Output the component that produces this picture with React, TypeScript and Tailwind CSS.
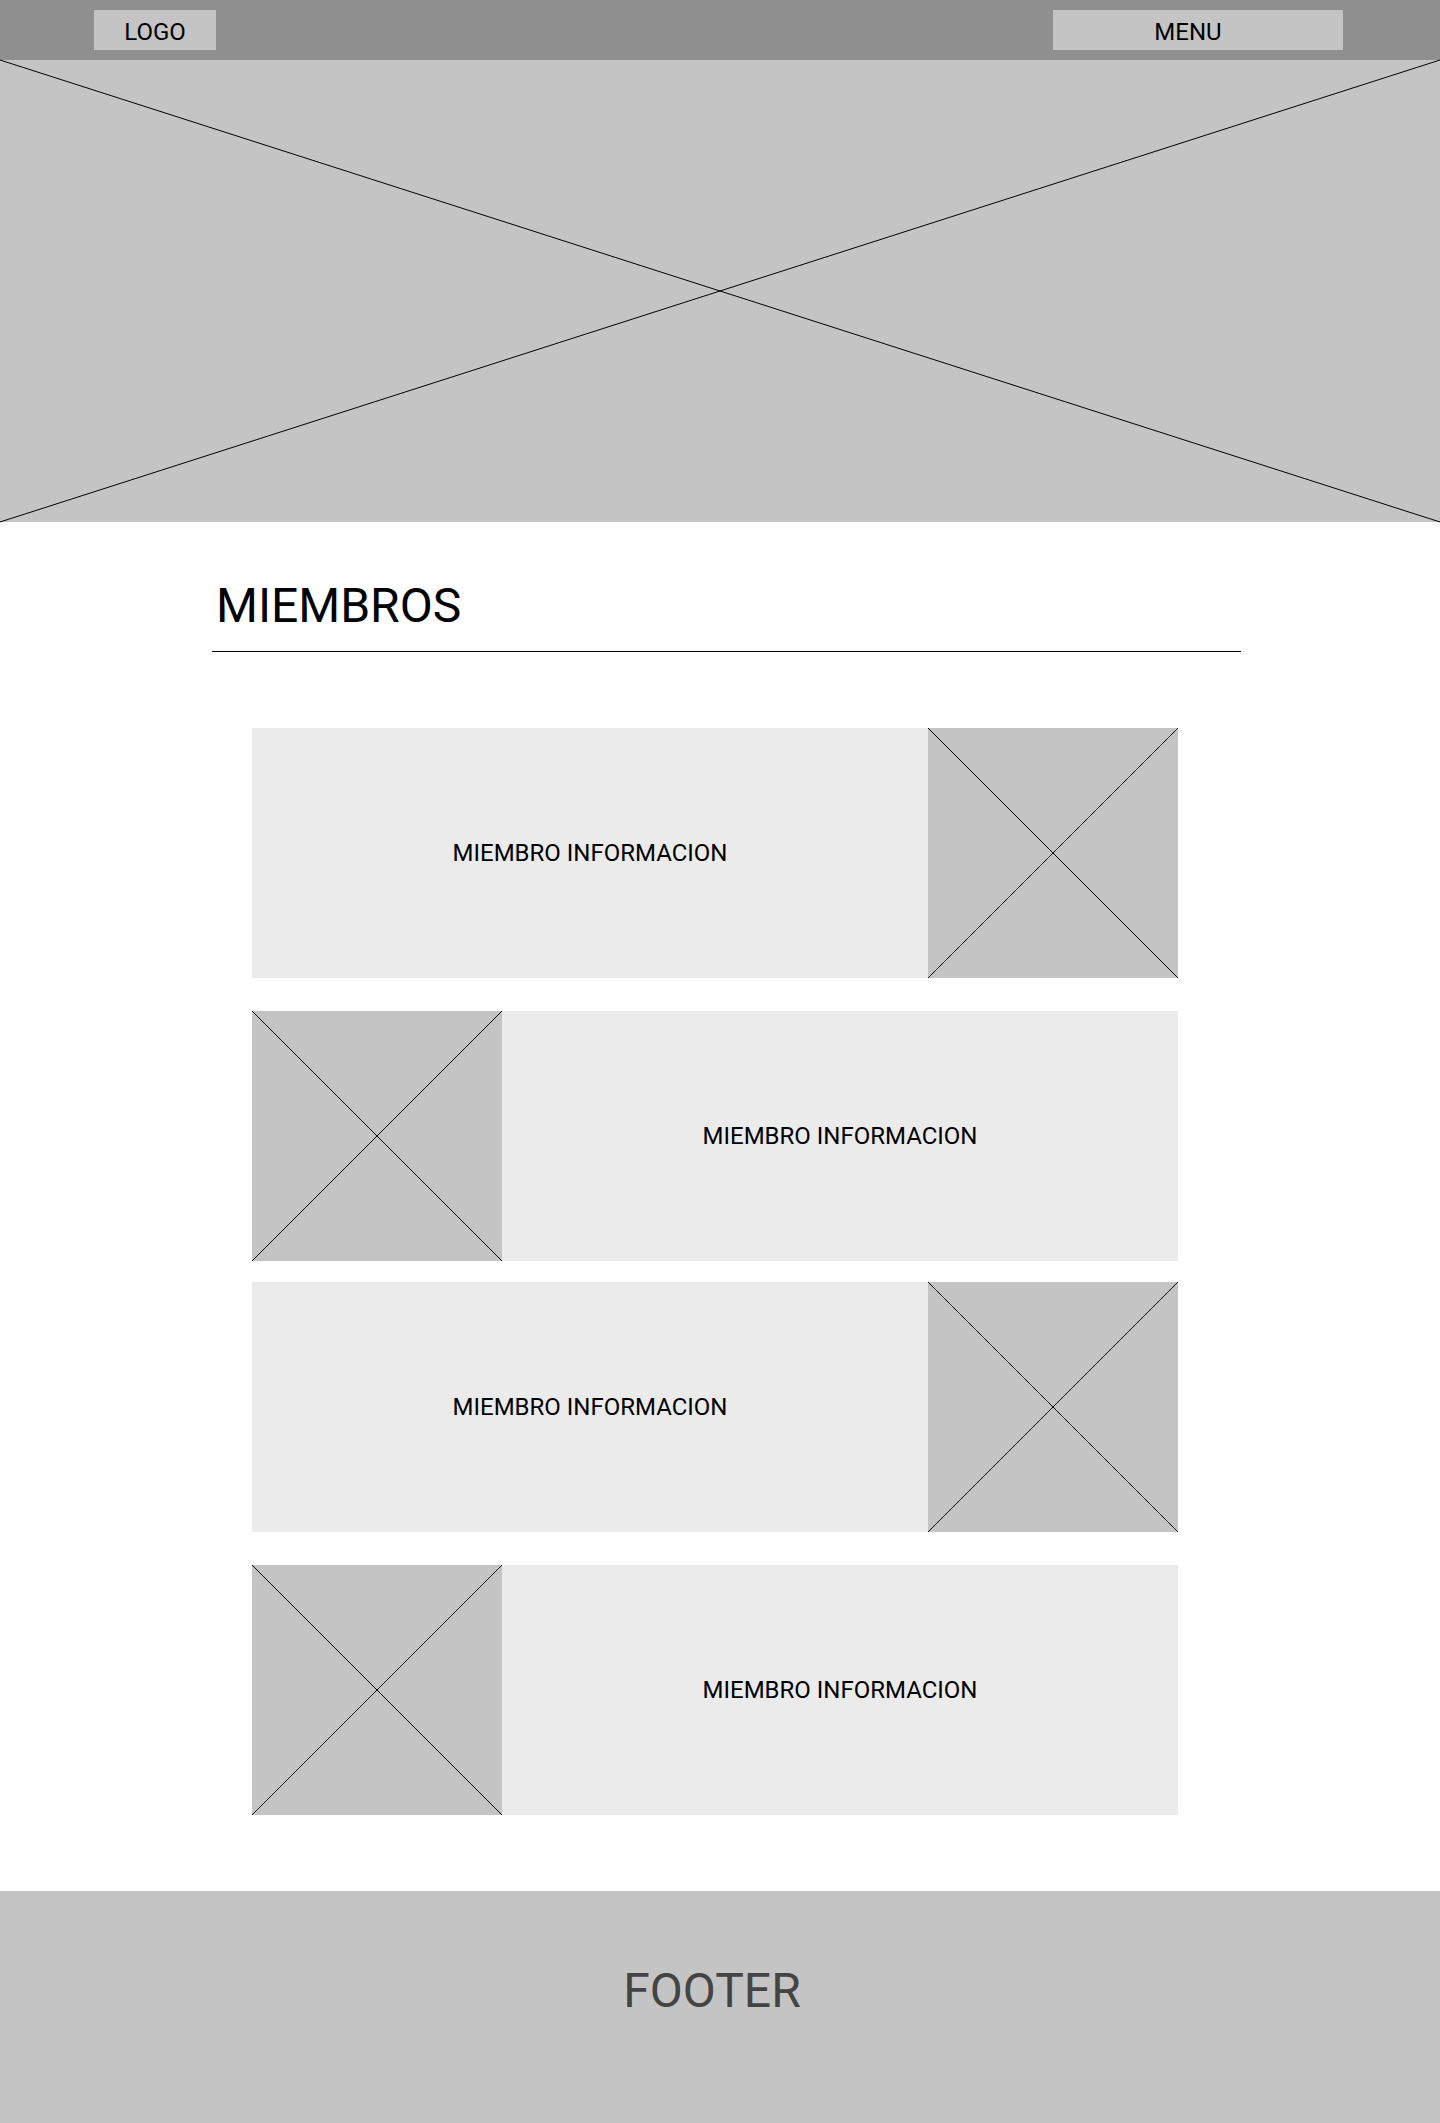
function Placeholder({ className, label }: { className: string; label: string }) {
  return (
    <div className={className}>
      <svg
        className="block h-full w-full overflow-visible"
        viewBox="0 0 100 100"
        preserveAspectRatio="none"
        role="img"
        aria-label={label}
      >
        <path d="M0 0L100 100M0 100L100 0" fill="none" stroke="#000" strokeWidth="1" vectorEffect="non-scaling-stroke" />
      </svg>
    </div>
  );
}

function Member({ reversed = false }: { reversed?: boolean }) {
  return (
    <article className={reversed ? "flex flex-row-reverse bg-[#ebebeb]" : "flex bg-[#ebebeb]"}>
      <div className="flex min-w-0 flex-1 items-center justify-center">
        <p className="text-center text-2xl leading-7">MIEMBRO INFORMACION</p>
      </div>
      <Placeholder className="h-[250px] w-[250px] shrink-0 bg-[#c4c4c4]" label="Foto del miembro" />
    </article>
  );
}

export default function App() {
  return (
    <div className="min-h-screen bg-white font-['Roboto',sans-serif] text-black">
      <header className="flex items-center justify-between bg-[#8f8f8f] px-4 py-2.5 lg:pr-[97px] lg:pl-[94px]">
        <a href="#inicio" className="flex h-10 w-[122px] items-center justify-center bg-[#c4c4c4] pt-1 text-2xl leading-7">
          LOGO
        </a>
        <button
          type="button"
          className="flex h-10 w-[290px] items-center justify-center bg-[#c4c4c4] pt-1 pr-5 text-2xl leading-7"
        >
          MENU
        </button>
      </header>

      <Placeholder className="h-[462px] bg-[#c4c4c4]" label="Imagen de portada" />

      <main className="px-4 pt-14 pb-[76px] lg:pr-[199px] lg:pl-[212px]">
        <h1 className="border-b border-black pb-[17px] pl-1 text-5xl leading-14">MIEMBROS</h1>
        <section className="mt-[76px] flex flex-col gap-[21px] lg:pr-[63px] lg:pl-10" aria-label="Miembros">
          <div className="flex flex-col gap-[33px]">
            <Member />
            <Member reversed />
          </div>
          <div className="flex flex-col gap-[33px]">
            <Member />
            <Member reversed />
          </div>
        </section>
      </main>

      <footer className="bg-[#c4c4c4] pt-[72px] pr-4 pb-[104px] text-center text-5xl leading-14 text-[#444444]">
        FOOTER
      </footer>
    </div>
  );
}
